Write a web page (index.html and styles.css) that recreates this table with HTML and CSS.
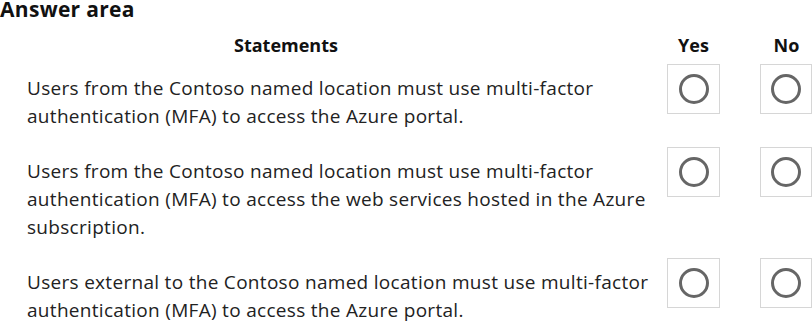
FILE: index.html
```html
<!DOCTYPE html>
<html lang="en">
<head>
    <meta charset="UTF-8">
    <title>Answer area</title>
    <link rel="stylesheet" href="styles.css">
</head>
<body>
    <div class="area">
        <div class="area-title">Answer area</div>

        <div class="grid grid-head">
            <div class="head head-statement">Statements</div>
            <div class="head">Yes</div>
            <div class="head">No</div>
        </div>

        <div class="grid grid-body">
            <div class="statement">Users from the Contoso named location must use multi-factor<br>authentication (MFA) to access the Azure portal.</div>
            <div class="choice"><span class="radio"></span></div>
            <div class="choice"><span class="radio"></span></div>

            <div class="statement">Users from the Contoso named location must use multi-factor<br>authentication (MFA) to access the web services hosted in the Azure<br>subscription.</div>
            <div class="choice"><span class="radio"></span></div>
            <div class="choice"><span class="radio"></span></div>

            <div class="statement">Users external to the Contoso named location must use multi-factor<br>authentication (MFA) to access the Azure portal.</div>
            <div class="choice"><span class="radio"></span></div>
            <div class="choice"><span class="radio"></span></div>
        </div>
    </div>
</body>
</html>
```

FILE: styles.css
```css
* {
    margin: 0;
    padding: 0;
    box-sizing: border-box;
}

body {
    font-family: 'Open Sans', 'Liberation Sans', sans-serif;
    background: #fff;
    color: #222;
    width: 812px;
    height: 322px;
    overflow: hidden;
}

.area-title {
    font-size: 21px;
    font-weight: 700;
    line-height: 16px;
    letter-spacing: 0.3px;
    color: #111;
    padding-top: 1px;
}

.grid {
    display: grid;
    grid-template-columns: 640px 93px 52px;
    padding-left: 27px;
}

.grid-head {
    margin-top: 16px;
}

.grid-body {
    margin-top: 7px;
    row-gap: 17px;
}

.head {
    width: 53px;
    font-size: 18px;
    font-weight: 700;
    line-height: 24px;
    color: #111;
    text-align: center;
}

.head-statement {
    width: auto;
    padding-right: 122px;
}

.statement {
    font-size: 19px;
    letter-spacing: 0.3px;
    line-height: 28px;
    padding-top: 10px;
    white-space: nowrap;
}

.choice {
    width: 53px;
    height: 50px;
    border: 1px solid #d6d6d6;
    display: flex;
    align-items: center;
    justify-content: center;
}

.choice:nth-child(3n) {
    width: 52px;
}

.radio {
    width: 30px;
    height: 30px;
    border: 3px solid #666;
    border-radius: 50%;
}
```
